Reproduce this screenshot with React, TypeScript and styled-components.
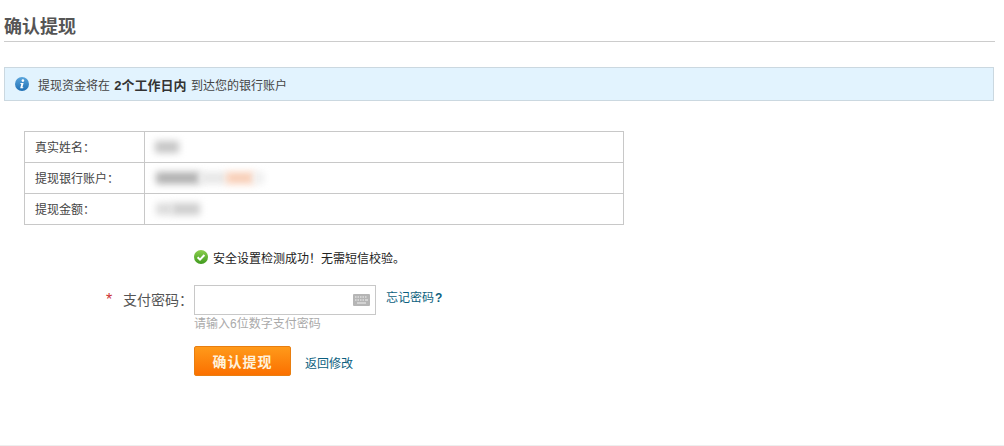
import styled, { createGlobalStyle } from 'styled-components';

const GlobalStyle = createGlobalStyle`
  html, body {
    margin: 0;
    padding: 0;
    background: #fff;
  }
  body {
    font-family: "Liberation Sans", "Noto Sans CJK SC", sans-serif;
    font-size: 12px;
    color: #333;
  }
`;

type Row = { label: string; blobs: { width: number; color: string }[]; inset: number };

const rows: Row[] = [
  { label: '真实姓名：', inset: 10, blobs: [{ width: 24, color: '#c6c6c6' }] },
  {
    label: '提现银行账户：',
    inset: 11,
    blobs: [
      { width: 44, color: '#b2b2b2' },
      { width: 26, color: '#e8e8e8' },
      { width: 28, color: '#f8cfb8' },
      { width: 10, color: '#eeeeee' },
    ],
  },
  {
    label: '提现金额：',
    inset: 11,
    blobs: [
      { width: 16, color: '#dcdcdc' },
      { width: 28, color: '#cecece' },
    ],
  },
];

export default function App() {
  return (
    <Page>
      <GlobalStyle />
      <Title>确认提现</Title>
      <Notice>
        <svg width="14" height="14" viewBox="0 0 14 14">
          <defs>
            <linearGradient id="info" x1="0" y1="0" x2="0" y2="1">
              <stop offset="0" stopColor="#5aa5dc" />
              <stop offset="1" stopColor="#1f6fb4" />
            </linearGradient>
          </defs>
          <circle cx="7" cy="7" r="7" fill="url(#info)" />
          <circle cx="7.9" cy="3.6" r="1.3" fill="#fff" />
          <path d="M5.6 6h3l-1.2 4.2h1l-.3 1H5.2l1.1-4.2h-1z" fill="#fff" />
        </svg>
        <span>
          提现资金将在 <strong>2个工作日内</strong> 到达您的银行账户
        </span>
      </Notice>
      <InfoTable>
        {rows.map((row) => (
          <InfoRow key={row.label}>
            <InfoLabel>{row.label}</InfoLabel>
            <InfoValue $inset={row.inset}>
              {row.blobs.map((blob, i) => (
                <Blurred key={i} style={{ width: blob.width, background: blob.color }} />
              ))}
            </InfoValue>
          </InfoRow>
        ))}
      </InfoTable>
      <Form>
        <Success>
          <svg width="14" height="14" viewBox="0 0 14 14">
            <defs>
              <linearGradient id="ok" x1="0" y1="0" x2="0" y2="1">
                <stop offset="0" stopColor="#8ccf4e" />
                <stop offset="1" stopColor="#3f9a1e" />
              </linearGradient>
            </defs>
            <circle cx="7" cy="7" r="7" fill="url(#ok)" />
            <path d="M3.6 7.2l2.4 2.4 4.4-4.6" fill="none" stroke="#fff" strokeWidth="2" />
          </svg>
          <span>安全设置检测成功！无需短信校验。</span>
        </Success>
        <PasswordRow>
          <PasswordLabel>
            <Star>*</Star>支付密码：
          </PasswordLabel>
          <PasswordField>
            <PasswordInput>
              <svg width="17" height="12" viewBox="0 0 17 12">
                <rect width="17" height="12" rx="1" fill="#b5b5b5" />
                <path
                  d="M2 3h1.5M4.5 3H6M7 3h1.5M9.5 3H11M12 3h1.5M2 6h1.5M4.5 6H6M7 6h1.5M9.5 6H11M12 6h3M4 9h9"
                  stroke="#f2f2f2"
                  strokeWidth="1.2"
                />
              </svg>
            </PasswordInput>
            <Hint>请输入6位数字支付密码</Hint>
          </PasswordField>
          <ForgotLink href="#">
            忘记密码<strong>?</strong>
          </ForgotLink>
        </PasswordRow>
        <Actions>
          <SubmitButton type="button">确认提现</SubmitButton>
          <BackLink href="#">返回修改</BackLink>
        </Actions>
      </Form>
      <BottomRule />
    </Page>
  );
}

const Page = styled.div`
  width: 1004px;
  height: 446px;
  box-sizing: border-box;
  padding: 15px 9px 0 4px;
  overflow: hidden;
  display: flex;
  flex-direction: column;
`;

const Title = styled.h2`
  margin: 0;
  height: 26px;
  line-height: 24px;
  font-size: 18px;
  font-weight: bold;
  color: #555;
  border-bottom: 1px solid #ccc;
`;

const Notice = styled.div`
  margin-top: 25px;
  margin-right: 1px;
  height: 34px;
  box-sizing: border-box;
  display: flex;
  align-items: center;
  gap: 9px;
  padding-left: 10px;
  background: #e2f3fe;
  border: 1px solid #cbd8e0;
  color: #444;

  strong {
    margin: 0 1px;
    font-size: 13px;
    font-weight: bold;
    color: #333;
  }
`;

const InfoTable = styled.div`
  margin: 30px 0 0 20px;
  width: 600px;
  box-sizing: border-box;
  border: 1px solid #c8c8c8;
  border-bottom: 0;
`;

const InfoRow = styled.div`
  display: flex;
  height: 31px;
  box-sizing: border-box;
  border-bottom: 1px solid #c8c8c8;
`;

const InfoLabel = styled.div`
  width: 120px;
  box-sizing: border-box;
  padding-left: 10px;
  line-height: 32px;
  border-right: 1px solid #c8c8c8;
  color: #444;
`;

const InfoValue = styled.div<{ $inset: number }>`
  display: flex;
  align-items: center;
  padding-left: ${(p) => p.$inset}px;
`;

const Blurred = styled.div`
  height: 12px;
  filter: blur(3.5px);
`;

const Form = styled.div`
  margin-top: 24px;
  padding-left: 190px;
  display: flex;
  flex-direction: column;
`;

const Success = styled.div`
  display: flex;
  align-items: center;
  gap: 5px;
  height: 16px;
  color: #222;
`;

const PasswordRow = styled.div`
  margin-top: 20px;
  display: flex;
  align-items: flex-start;
`;

const PasswordLabel = styled.div`
  margin-left: -88px;
  width: 88px;
  height: 30px;
  line-height: 30px;
  font-size: 14px;
  color: #555;
  white-space: nowrap;
`;

const Star = styled.span`
  display: inline-block;
  width: 17px;
  font-size: 16px;
  color: #c33;
`;

const PasswordField = styled.div`
  width: 182px;
`;

const PasswordInput = styled.div`
  height: 30px;
  box-sizing: border-box;
  display: flex;
  align-items: center;
  justify-content: flex-end;
  padding-right: 5px;
  border: 1px solid #c8c8c8;
  background: #fff;
`;

const Hint = styled.div`
  height: 17px;
  line-height: 19px;
  color: #aaa;
`;

const ForgotLink = styled.a`
  margin-left: 10px;
  line-height: 26px;
  color: #0c5f80;
  text-decoration: none;

  strong {
    margin-left: 1px;
    font-weight: bold;
  }
`;

const Actions = styled.div`
  margin-top: 14px;
  display: flex;
  align-items: flex-start;
  gap: 14px;
`;

const SubmitButton = styled.button`
  width: 97px;
  height: 30px;
  padding: 0;
  border: 1px solid #e87e10;
  border-radius: 2px;
  background: linear-gradient(#ff9a1a, #fb7000);
  color: #fff2dc;
  font-family: "Liberation Serif", "Noto Sans CJK SC", serif;
  font-size: 14px;
  font-weight: bold;
  letter-spacing: 1px;
`;

const BackLink = styled.a`
  color: #0c5f80;
  text-decoration: none;
  line-height: 37px;
`;

const BottomRule = styled.div`
  margin: auto -9px 0 -4px;
  height: 1px;
  background: #eee;
`;
